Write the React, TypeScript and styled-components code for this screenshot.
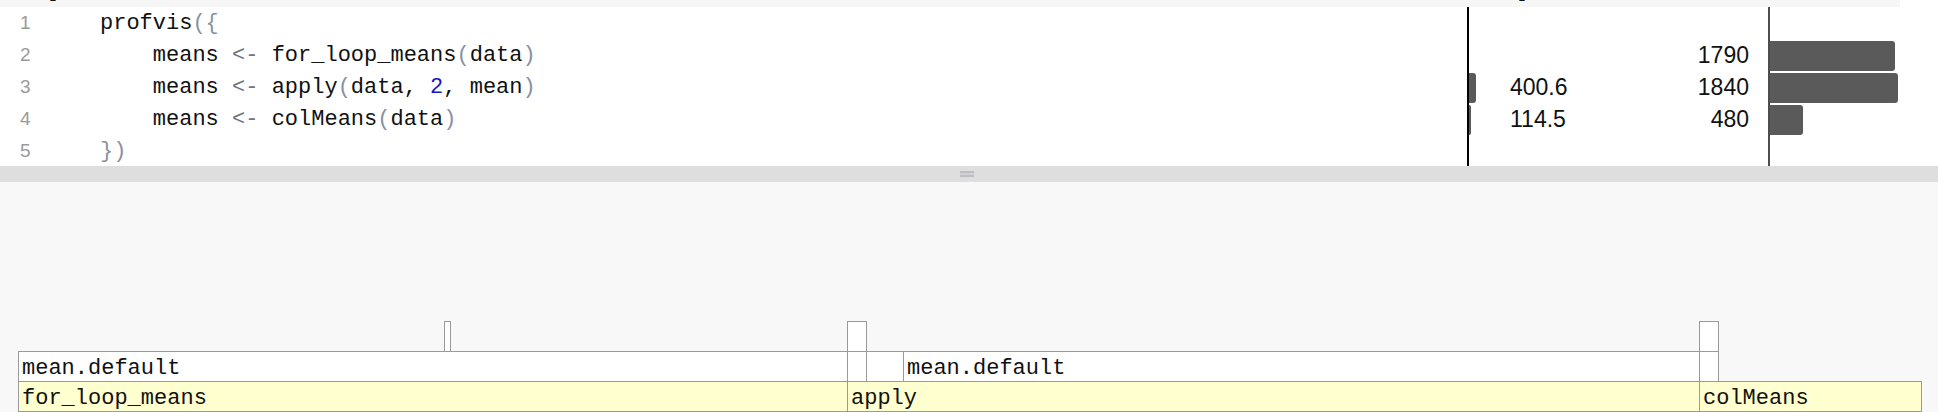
import React from 'react';
import styled, { createGlobalStyle } from 'styled-components';

const GlobalStyle = createGlobalStyle`
  html, body {
    margin: 0;
    padding: 0;
    background: #f8f8f8;
  }
  body {
    font-family: 'Liberation Sans', Arial, sans-serif;
  }
`;

const Page = styled.div`
  width: 1938px;
  height: 412px;
  display: flex;
  flex-direction: column;
  overflow: hidden;
`;

const CodePanel = styled.div`
  flex: none;
  height: 166px;
  background: #fff;
  overflow: hidden;
`;

const HeaderStrip = styled.div`
  width: 1900px;
  height: 7px;
  background: #f6f6f6;
  display: flex;
  overflow: hidden;
`;

const HeaderCell = styled.div<{ $width: number; $pad: number }>`
  flex: none;
  width: ${p => p.$width}px;
  padding-left: ${p => p.$pad}px;
  box-sizing: border-box;
  font-weight: bold;
  font-size: 10px;
  line-height: 10px;
  margin-top: -7px;
  color: #111;
`;

const Row = styled.div`
  display: grid;
  grid-template-columns: 1467px 301px 1fr;
  height: 32px;
`;

const CodeCell = styled.div`
  display: flex;
  align-items: center;
`;

const LineNo = styled.span`
  flex: none;
  width: 100px;
  padding-left: 20px;
  box-sizing: border-box;
  font-family: 'Liberation Sans', Arial, sans-serif;
  font-size: 19px;
  color: #9a9a9a;
`;

const Code = styled.span`
  font-family: 'Liberation Mono', 'Courier New', monospace;
  font-size: 22px;
  white-space: pre;
  color: #111;
`;

const Tok = styled.span<{ $kind: 'punc' | 'op' | 'num' }>`
  color: ${p => (p.$kind === 'num' ? '#1515c8' : p.$kind === 'op' ? '#6e7480' : '#8791a3')};
`;

const MemCell = styled.div`
  display: flex;
  align-items: stretch;
  border-left: 2px solid #000;
`;

const BarTrack = styled.div<{ $width?: number }>`
  flex: ${p => (p.$width ? 'none' : '1')};
  width: ${p => (p.$width ? `${p.$width}px` : 'auto')};
  display: flex;
  align-items: flex-end;
`;

const Bar = styled.div`
  height: 30px;
  background: #5a5a5a;
  border-radius: 0 3px 3px 0;
`;

const Value = styled.div<{ $right?: boolean }>`
  display: flex;
  align-items: center;
  justify-content: ${p => (p.$right ? 'flex-end' : 'flex-start')};
  flex: ${p => (p.$right ? '1' : 'none')};
  width: ${p => (p.$right ? 'auto' : '120px')};
  padding-right: ${p => (p.$right ? '19px' : '0')};
  font-size: 23px;
  color: #111;
`;

const TimeCell = styled.div`
  display: flex;
  border-left: 2px solid #4d4d4d;
`;

const Splitter = styled.div`
  flex: none;
  height: 16px;
  background: #dedede;
  display: flex;
  align-items: center;
  justify-content: center;
`;

const Handle = styled.div`
  width: 14px;
  height: 6px;
  margin-left: -4px;
  background: linear-gradient(#bdbdc3 0 2px, #d0d0d5 2px 4px, #bdbdc3 4px 6px);
`;

const FlameCanvas = styled.div`
  flex: 1;
  position: relative;
  overflow: hidden;
  background: #f8f8f8;
`;

const FlameCell = styled.div<{ $root: boolean }>`
  position: absolute;
  height: 31px;
  box-sizing: border-box;
  border: 1px solid #9a9a9a;
  background: ${p => (p.$root ? '#ffffcf' : '#fff')};
  padding: 4px 0 0 3px;
  overflow: hidden;
  white-space: nowrap;
  font-family: 'Liberation Mono', 'Courier New', monospace;
  font-size: 22px;
  line-height: 26px;
  color: #111;
`;

type Piece = string | { t: string; k: 'punc' | 'op' | 'num' };

const lines: Piece[][] = [
  ['profvis', { t: '({', k: 'punc' }],
  ['    means ', { t: '<-', k: 'op' }, ' for_loop_means', { t: '(', k: 'punc' }, 'data', { t: ')', k: 'punc' }],
  ['    means ', { t: '<-', k: 'op' }, ' apply', { t: '(', k: 'punc' }, 'data, ', { t: '2', k: 'num' }, ', mean', { t: ')', k: 'punc' }],
  ['    means ', { t: '<-', k: 'op' }, ' colMeans', { t: '(', k: 'punc' }, 'data', { t: ')', k: 'punc' }],
  [{ t: '})', k: 'punc' }],
];

const stats: ({ mem: number; time: number } | null)[] = [
  null,
  { mem: 0, time: 1790 },
  { mem: 400.6, time: 1840 },
  { mem: 114.5, time: 480 },
  null,
];

const maxTime = 1840;

const flame = [
  { level: 0, x: 18, x2: 847, label: 'for_loop_means' },
  { level: 0, x: 847, x2: 1699, label: 'apply' },
  { level: 0, x: 1699, x2: 1921, label: 'colMeans' },
  { level: 1, x: 18, x2: 847, label: 'mean.default' },
  { level: 1, x: 847, x2: 866 },
  { level: 1, x: 866, x2: 903 },
  { level: 1, x: 903, x2: 1699, label: 'mean.default' },
  { level: 1, x: 1699, x2: 1718 },
  { level: 2, x: 444, x2: 450 },
  { level: 2, x: 847, x2: 866 },
  { level: 2, x: 1699, x2: 1718 },
];

export default function App() {
  return (
    <Page>
      <GlobalStyle />
      <CodePanel>
        <HeaderStrip>
          <HeaderCell $width={1467} $pad={48}>▲</HeaderCell>
          <HeaderCell $width={301} $pad={50}>▲</HeaderCell>
        </HeaderStrip>
        {lines.map((pieces, i) => {
          const s = stats[i];
          return (
            <Row key={i}>
              <CodeCell>
                <LineNo>{i + 1}</LineNo>
                <Code>
                  {pieces.map((p, j) =>
                    typeof p === 'string' ? p : <Tok key={j} $kind={p.k}>{p.t}</Tok>
                  )}
                </Code>
              </CodeCell>
              <MemCell>
                <BarTrack $width={41}>
                  {s && s.mem > 0 && <Bar style={{ width: Math.max(2, s.mem * 0.0187) }} />}
                </BarTrack>
                <Value>{s && s.mem > 0 ? s.mem.toFixed(1) : ''}</Value>
                <Value $right>{s ? s.time : ''}</Value>
              </MemCell>
              <TimeCell>
                <BarTrack>
                  {s && <Bar style={{ width: (s.time / maxTime) * 128 }} />}
                </BarTrack>
              </TimeCell>
            </Row>
          );
        })}
      </CodePanel>
      <Splitter>
        <Handle />
      </Splitter>
      <FlameCanvas>
        {flame.map((c, i) => (
          <FlameCell
            key={i}
            $root={c.level === 0}
            style={{ left: c.x, width: c.x2 - c.x + 1, top: 199 - c.level * 30 }}
          >
            {c.label}
          </FlameCell>
        ))}
      </FlameCanvas>
    </Page>
  );
}
